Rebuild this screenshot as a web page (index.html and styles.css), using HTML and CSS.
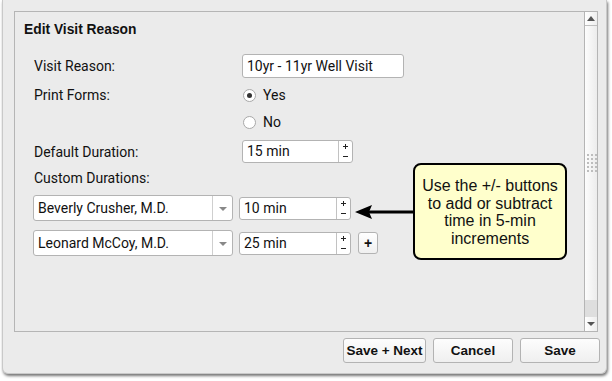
FILE: index.html
```html
<!DOCTYPE html>
<html>
<head>
<meta charset="utf-8">
<link rel="stylesheet" href="styles.css">
</head>
<body>
<div class="window">
  <div class="panel">
    <div class="content">
      <h1 class="title">Edit Visit Reason</h1>
      <div class="row row-reason">
        <span class="label">Visit Reason:</span>
        <div class="textbox wide">10yr - 11yr Well Visit</div>
      </div>
      <div class="row row-yes">
        <span class="label">Print Forms:</span>
        <label class="radio"><span class="dot checked"></span>Yes</label>
      </div>
      <div class="row row-no">
        <span class="label"></span>
        <label class="radio"><span class="dot"></span>No</label>
      </div>
      <div class="row row-default">
        <span class="label">Default Duration:</span>
        <div class="spinner">
          <span class="spin-val">15 min</span>
          <span class="spin-btns"><i class="plus"></i><i class="minus"></i></span>
        </div>
      </div>
      <div class="row row-custom">
        <span class="label">Custom Durations:</span>
      </div>
      <div class="crow crow-1">
        <div class="select"><span class="sel-val">Beverly Crusher, M.D.</span><span class="sel-arrow"></span></div>
        <div class="spinner small">
          <span class="spin-val">10 min</span>
          <span class="spin-btns"><i class="plus"></i><i class="minus"></i></span>
        </div>
      </div>
      <div class="crow crow-2">
        <div class="select"><span class="sel-val">Leonard McCoy, M.D.</span><span class="sel-arrow"></span></div>
        <div class="spinner small">
          <span class="spin-val">25 min</span>
          <span class="spin-btns"><i class="plus"></i><i class="minus"></i></span>
        </div>
        <button class="add">+</button>
      </div>
    </div>
    <div class="scrollbar">
      <div class="sb-up"><span class="tri-up"></span></div>
      <div class="sb-thumb">
        <div class="grip">
          <i></i><i></i><i></i><i></i><i></i><i></i><i></i><i></i><i></i><i></i><i></i><i></i><i></i><i></i><i></i>
        </div>
      </div>
      <div class="sb-track"></div>
      <div class="sb-down"><span class="tri-down"></span></div>
    </div>
    <svg class="arrow" width="62" height="16" viewBox="0 0 62 16">
      <line x1="12" y1="8" x2="62" y2="8" stroke="#000" stroke-width="3"/>
      <polygon points="0,8 17,1 14,8 17,15" fill="#000"/>
    </svg>
    <div class="callout">Use the +/- buttons to add or subtract time in 5-min increments</div>
  </div>
  <div class="actions">
    <button class="btn">Save + Next</button>
    <button class="btn">Cancel</button>
    <button class="btn">Save</button>
  </div>
</div>
</body>
</html>
```

FILE: styles.css
```css
* { box-sizing: border-box; }
html, body { margin: 0; padding: 0; }
body {
  background: #fff;
  font-family: Roboto, "Liberation Sans", sans-serif;
  font-size: 14px;
  color: #111;
  width: 612px;
  height: 381px;
  overflow: hidden;
}
.window {
  margin-left: 2px;
  width: 605px;
  height: 374px;
  background: #ebebeb;
  border: 1px solid #c9c9c9;
  border-top: none;
  border-radius: 0 0 6px 6px;
  box-shadow: 1px 2px 3px rgba(0,0,0,0.55);
  padding: 11px 0 0 11px;
}
.panel {
  position: relative;
  width: 584px;
  height: 321px;
  border: 1px solid #b5b5b5;
  display: flex;
}
.content {
  flex: 1;
  padding: 9px 0 0 9px;
}
.title {
  margin: 0;
  font-family: "Liberation Sans", Arial, sans-serif;
  font-size: 13.8px;
  font-weight: bold;
  line-height: 17px;
  color: #111;
}
.row {
  display: flex;
  align-items: center;
  padding-left: 10px;
}
.label { width: 208px; }
.row-reason { margin-top: 16px; height: 24px; }
.row-yes { margin-top: 7px; height: 20px; }
.row-no { margin-top: 7px; height: 20px; }
.row-default { margin-top: 8px; height: 23px; }
.row-custom { margin-top: 6px; height: 18px; }
.textbox {
  height: 24px;
  background: #fff;
  border: 1px solid #b3b3b3;
  border-radius: 3px;
  padding: 0 4px;
  line-height: 22px;
}
.textbox.wide { width: 162px; }
.radio {
  display: flex;
  align-items: center;
  gap: 7px;
  margin-left: 1px;
}
.dot {
  width: 13px;
  height: 13px;
  border-radius: 50%;
  border: 1px solid #a8a8a8;
  background: #fff;
  display: flex;
  align-items: center;
  justify-content: center;
}
.dot.checked::after {
  content: "";
  width: 5px;
  height: 5px;
  border-radius: 50%;
  background: #333;
}
.spinner {
  display: flex;
  width: 111px;
  height: 23px;
  background: #fff;
  border: 1px solid #b3b3b3;
  border-radius: 3px;
}
.spin-val {
  flex: 1;
  padding-left: 4px;
  line-height: 21px;
}
.spin-btns {
  width: 14px;
  border-left: 1px solid #c2c2c2;
  display: flex;
  flex-direction: column;
  align-items: center;
  justify-content: center;
  gap: 5px;
}
.plus, .minus {
  display: block;
  position: relative;
  width: 5px;
  height: 5px;
}
.plus::before, .minus::before {
  content: "";
  position: absolute;
  left: 0;
  top: 2px;
  width: 5px;
  height: 1px;
  background: #222;
}
.plus::after {
  content: "";
  position: absolute;
  left: 2px;
  top: 0;
  width: 1px;
  height: 5px;
  background: #222;
}
.crow {
  display: flex;
  align-items: center;
  padding-left: 9px;
}
.crow-1 { margin-top: 8px; }
.crow-2 { margin-top: 9px; }
.select {
  display: flex;
  width: 200px;
  height: 26px;
  background: #fff;
  border: 1px solid #b3b3b3;
  border-radius: 3px;
}
.sel-val {
  flex: 1;
  padding-left: 4px;
  line-height: 24px;
}
.sel-arrow {
  width: 20px;
  border-left: 1px solid #cfcfcf;
  position: relative;
}
.sel-arrow::after {
  content: "";
  position: absolute;
  left: 6px;
  top: 11px;
  border-left: 4px solid transparent;
  border-right: 4px solid transparent;
  border-top: 4px solid #888;
}
.spinner.small { margin-left: 6px; width: 112px; }
.add {
  margin-left: 7px;
  width: 20px;
  height: 22px;
  padding: 0;
  border: 1px solid #b3b3b3;
  border-radius: 3px;
  background: linear-gradient(#fff, #f0f0f0);
  font-family: "Liberation Sans", Arial, sans-serif;
  font-weight: bold;
  font-size: 14px;
  color: #111;
  line-height: 18px;
}
.scrollbar {
  width: 13px;
  border-left: 1px solid #b5b5b5;
  display: flex;
  flex-direction: column;
}
.sb-up, .sb-down {
  height: 14px;
  background: linear-gradient(90deg, #fff, #eee);
  display: flex;
  align-items: center;
  justify-content: center;
}
.sb-up { border-bottom: 1px solid #c0c0c0; }
.tri-up {
  border-left: 4px solid transparent;
  border-right: 4px solid transparent;
  border-bottom: 5px solid #555;
}
.tri-down {
  border-left: 4px solid transparent;
  border-right: 4px solid transparent;
  border-top: 4px solid #555;
}
.sb-thumb {
  height: 274px;
  background: linear-gradient(90deg, #fdfdfd, #ececec);
  display: flex;
  align-items: center;
  justify-content: center;
}
.grip {
  display: grid;
  grid-template-columns: repeat(3, 2px);
  grid-auto-rows: 2px;
  gap: 2px 2px;
  margin-left: 1px;
}
.grip i { background: #bdbdbd; display: block; }
.sb-track { flex: 1; background: #dedede; }
.arrow {
  position: absolute;
  left: 340px;
  top: 192px;
}
.callout {
  position: absolute;
  left: 398px;
  top: 151px;
  width: 154px;
  height: 97px;
  background: #ffffcc;
  border: 2px solid #000;
  border-radius: 8px;
  font-family: "Liberation Sans", Arial, sans-serif;
  font-size: 16px;
  line-height: 17.5px;
  text-align: center;
  color: #111;
  padding: 12px 4px 0;
}
.actions {
  display: flex;
  justify-content: flex-end;
  gap: 7px;
  margin-top: 6px;
  width: 586px;
}
.btn {
  height: 25px;
  width: 80px;
  padding: 0;
  border: 1px solid #b3b3b3;
  border-radius: 3px;
  background: linear-gradient(#fdfdfd, #efefef);
  font-family: "Liberation Sans", Arial, sans-serif;
  font-weight: bold;
  font-size: 13.5px;
  color: #111;
}
.btn:first-child { width: 83px; }
```
